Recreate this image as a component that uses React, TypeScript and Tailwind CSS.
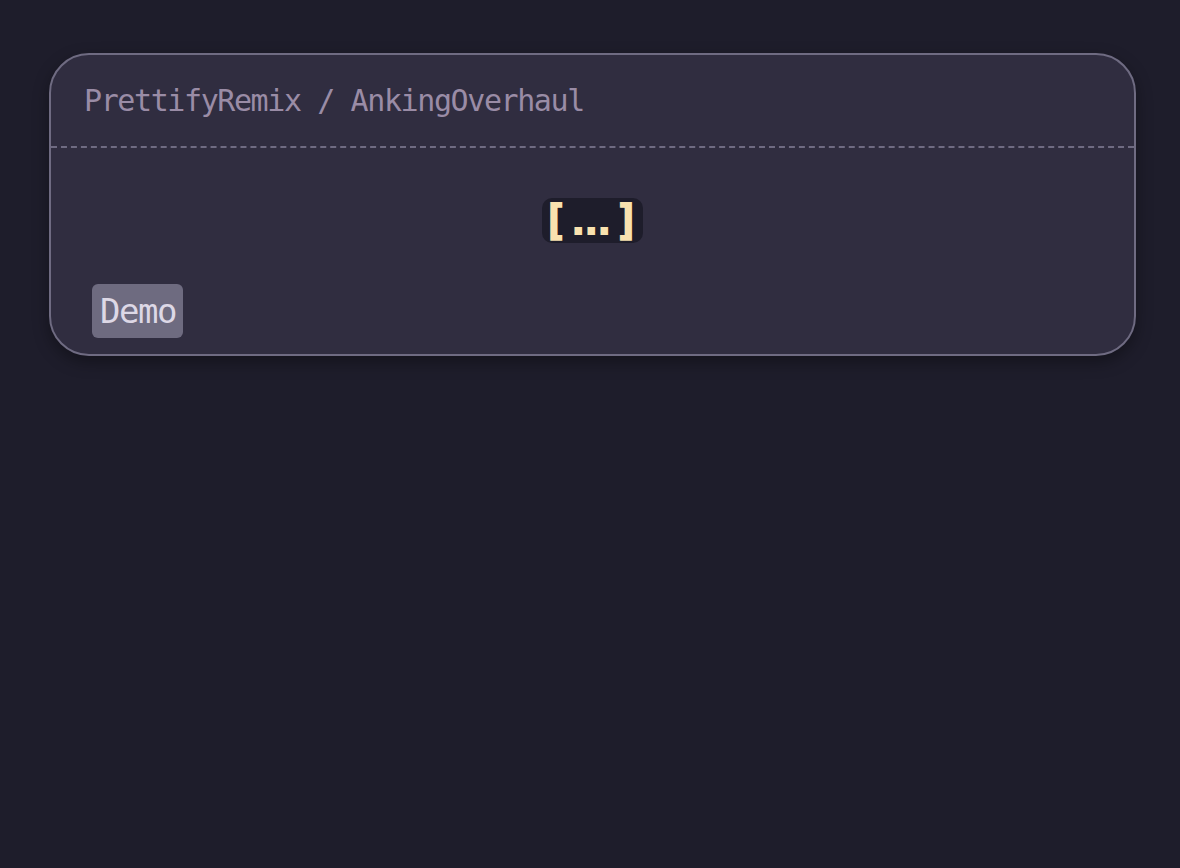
const App = (): JSX.Element => {
  return (
    <div className="min-h-[868px] w-full bg-[#1e1d2b] pt-[53px] pl-[49px]" style={{ fontFamily: '"DejaVu Sans Mono", "Liberation Mono", monospace' }}>
      <div className="w-[1087px] rounded-[40px] border-2 border-[#6f6b82] bg-[#302d40] shadow-[0_6px_16px_rgba(0,0,0,0.35)]">
        <div className="flex h-[93px] items-center border-b-2 border-dashed border-[#6f6b82] pl-[33px]">
          <span className="text-[30px] tracking-[-1.4px] text-[#9a8ca6]">PrettifyRemix / AnkingOverhaul</span>
        </div>
        <div className="flex flex-col pt-[50px] pb-[16px]">
          <div className="flex justify-center">
            <button className="flex h-[45px] w-[101px] items-center rounded-[10px] bg-[#1e1d2b] pl-[1px] pr-[4px] font-bold text-[#f9e2af] leading-none [-webkit-text-stroke:2px_#f9e2af]">
              <span className="w-[24px] text-[40px] -mt-[2px]">[</span>
              <span className="ml-[1px] w-[39px] text-[34px] tracking-[-7.5px] mt-[2px]">...</span>
              <span className="ml-[8px] w-[24px] text-[40px] -mt-[2px]">]</span>
            </button>
          </div>
          <div className="mt-[41px] pl-[41px]">
            <span className="inline-flex h-[54px] items-center rounded-[6px] bg-[#6e6b80] pl-[8px] pr-[7px] text-[34px] tracking-[-1.5px] text-[#ddd8e6]">
              Demo
            </span>
          </div>
        </div>
      </div>
    </div>
  );
};

export default App;
